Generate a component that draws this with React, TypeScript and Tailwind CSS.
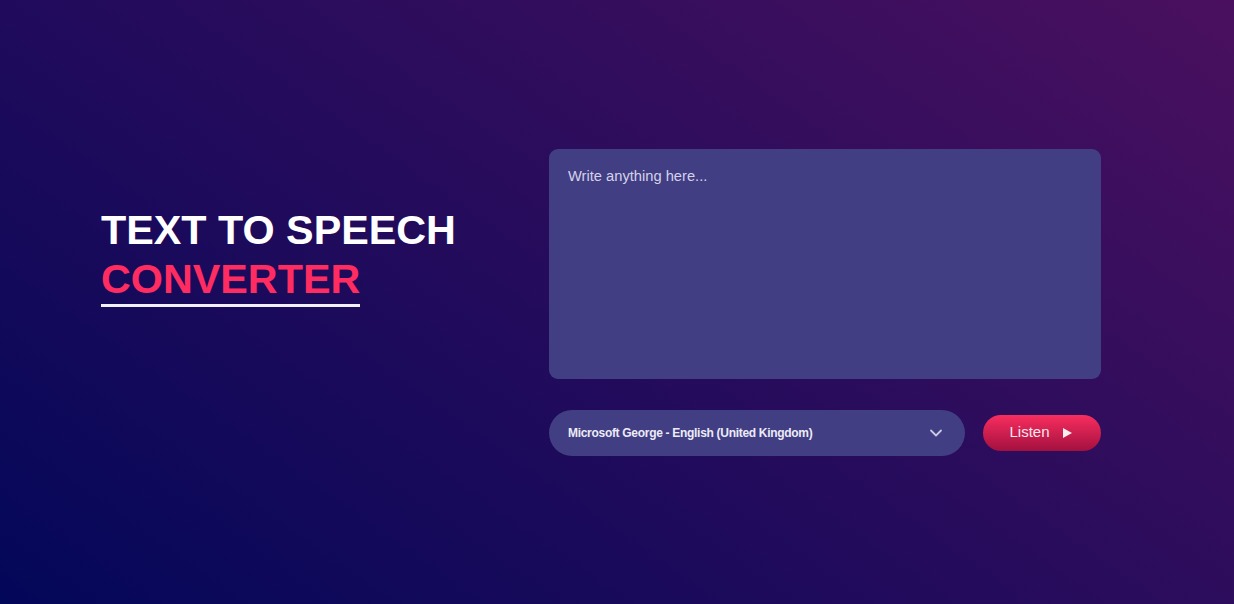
import { useState } from "react";

const voices = ["Microsoft George - English (United Kingdom)"];

export default function App() {
  const [text, setText] = useState("");

  return (
    <div className="flex h-[604px] w-full items-center bg-[linear-gradient(35deg,#030759,#4a105f)] font-['Liberation_Sans',Arial,sans-serif]">
      <div className="flex items-start pl-[101px]">
        {/* heading */}
        <div className="w-[448px] pt-[57px]">
          <h1 className="text-[41.3px] font-bold leading-[49px] text-white">
            TEXT TO SPEECH
            <br />
            <span className="inline-block border-b-[3px] border-[#f2f0ff] text-[#ff2c62]">CONVERTER</span>
          </h1>
        </div>

        {/* converter */}
        <div className="flex w-[552px] flex-col gap-[31px]">
          <textarea
            value={text}
            onChange={(e) => setText(e.target.value)}
            placeholder="Write anything here..."
            className="h-[230px] w-full resize-none rounded-[9px] bg-[#423e83] px-[19px] pt-[16px] text-[14.7px] text-white outline-none placeholder:text-[#d3d2ea]"
          />
          <div className="flex items-center gap-[18px]">
            <div className="relative flex h-[46px] w-[416px] items-center rounded-full bg-[#423e83] px-[19px]">
              <span className="text-[12px] font-bold tracking-[-0.3px] text-[#ecebf8]">{voices[0]}</span>
              <svg
                className="absolute right-[22px] top-[18px]"
                width="14"
                height="10"
                viewBox="0 0 14 10"
                fill="none"
                stroke="#c9c8e4"
                strokeWidth="1.8"
                strokeLinecap="round"
                strokeLinejoin="round"
              >
                <path d="M2 2.5 L7 7.5 L12 2.5" />
              </svg>
            </div>
            <button className="flex h-[36px] w-[118px] items-center justify-center gap-[13px] rounded-full bg-[linear-gradient(to_bottom,#f82e5f,#a3103f)] pr-[3px] text-[15px] text-[#fbe8ee]">
              Listen
              <svg width="9" height="10" viewBox="0 0 9 10" fill="#f7eef2">
                <path d="M0 0 L9 5 L0 10 Z" />
              </svg>
            </button>
          </div>
        </div>
      </div>
    </div>
  );
}
